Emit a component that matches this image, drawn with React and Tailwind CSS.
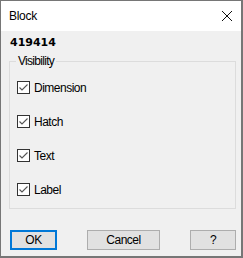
import React from "react";

function CheckRow({ label }) {
  return (
    <div className="flex items-center h-[13px] gap-[4px]">
      <span className="w-[13px] h-[13px] border border-[#333333] bg-white flex items-center justify-center shrink-0">
        <svg width="11" height="11" viewBox="0 0 11 11">
          <polyline points="1.5,5.5 4,8 9.5,2.5" fill="none" stroke="#555555" strokeWidth="1.1" />
        </svg>
      </span>
      <span className="leading-[14px]">{label}</span>
    </div>
  );
}

export default function App() {
  return (
    <div className="w-[243px] h-[258px] bg-[#f0f0f0] border-t border-l border-r-2 border-b-2 border-[#767676] flex flex-col font-['Liberation_Sans',Arial,sans-serif] text-[12px] tracking-[-0.5px] text-black">
      <div className="h-[30px] bg-white flex items-center justify-between pl-[8px] pr-[9px] shrink-0">
        <span className="leading-[14px] tracking-[-0.3px]">Block</span>
        <svg width="10" height="10" viewBox="0 0 10 10">
          <line x1="0" y1="0" x2="10" y2="10" stroke="#111" strokeWidth="1" />
          <line x1="10" y1="0" x2="0" y2="10" stroke="#111" strokeWidth="1" />
        </svg>
      </div>
      <div className="flex-1 flex flex-col pl-[8px] pr-[5px] pt-[5px]">
        <div className="font-['DejaVu_Sans',sans-serif] font-bold text-[11px] leading-[13px] tracking-normal pl-[1px]">419414</div>
        <div className="relative mt-[12px] h-[148px] border border-[#dcdcdc] flex flex-col pt-[19px] pl-[7px] gap-[21px]">
          <span className="absolute left-[6px] top-[-8px] px-[2px] bg-[#f0f0f0] leading-[14px] tracking-[-0.7px]">Visibility</span>
          <CheckRow label="Dimension" />
          <CheckRow label="Hatch" />
          <CheckRow label="Text" />
          <CheckRow label="Label" />
        </div>
        <div className="mt-[21px] pl-[1px] flex justify-between">
          <button className="w-[47px] h-[20px] border-2 border-[#0078d7] bg-[#e1e1e1] flex items-center justify-center leading-[14px]">OK</button>
          <button className="w-[73px] h-[20px] border border-[#adadad] bg-[#e1e1e1] flex items-center justify-center leading-[14px]">Cancel</button>
          <button className="w-[46px] h-[20px] border border-[#adadad] bg-[#e1e1e1] flex items-center justify-center leading-[14px]">?</button>
        </div>
      </div>
    </div>
  );
}
